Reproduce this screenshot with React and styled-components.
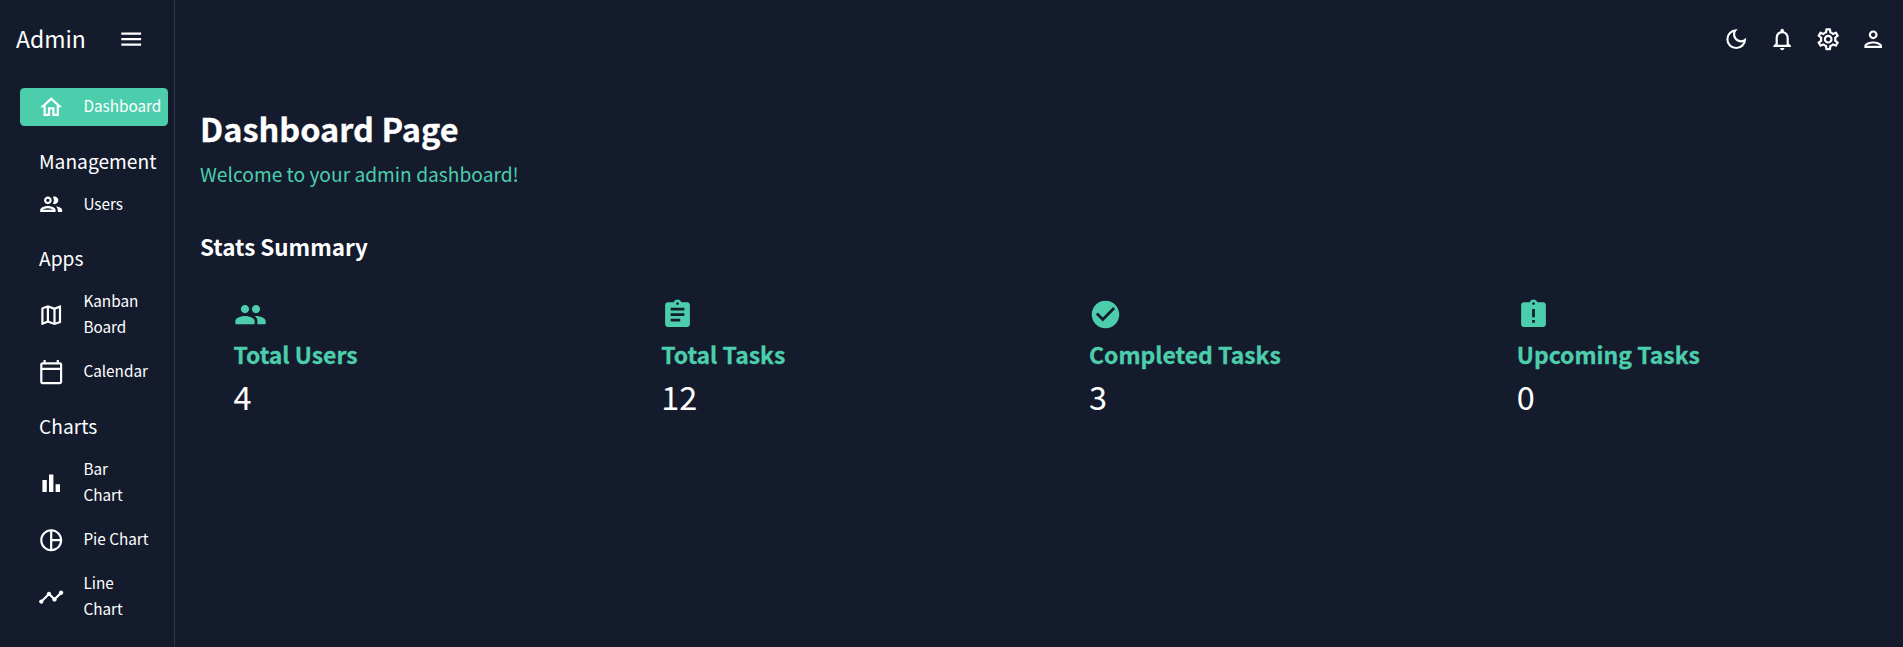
import React from "react";
import styled, { createGlobalStyle } from "styled-components";
import {
  MdMenu,
  MdOutlineHome,
  MdOutlinePeople,
  MdOutlineMap,
  MdOutlineCalendarToday,
  MdOutlineBarChart,
  MdOutlinePieChartOutline,
  MdOutlineTimeline,
  MdOutlineDarkMode,
  MdOutlineNotifications,
  MdOutlineSettings,
  MdOutlinePerson,
  MdPeople,
  MdAssignment,
  MdCheckCircle,
  MdAssignmentLate,
} from "react-icons/md";

const GlobalStyle = createGlobalStyle`
  * { box-sizing: border-box; }
  body {
    margin: 0;
    background: #141b2d;
    color: #fff;
    font-family: "Source Sans Pro", "Noto Sans CJK SC", "Noto Sans", sans-serif;
  }
  svg { display: block; flex: none; }
`;

const Shell = styled.div`
  display: flex;
  height: 100vh;
  overflow: hidden;
`;

const Sidebar = styled.aside`
  flex: none;
  width: 175px;
  border-right: 1px solid #2f3647;
`;

const Brand = styled.div`
  display: flex;
  align-items: center;
  height: 77.6px;
  padding-left: 16px;
`;

const BrandName = styled.span`
  width: 101.6px;
  padding-bottom: 2px;
  font-size: 23px;
  line-height: 36px;
`;

const Nav = styled.nav`
  display: flex;
  flex-direction: column;
  padding: 10.4px 6px 0 20px;
`;

const NavHeading = styled.h2`
  margin: 0;
  height: ${(p) => p.$height}px;
  padding: ${(p) => p.$top}px 0 0 19px;
  font-size: 19.2px;
  font-weight: 400;
  line-height: 32px;
`;

const NavItem = styled.a`
  display: flex;
  align-items: center;
  gap: 18.6px;
  height: ${(p) => (p.$tall ? 62 : 38)}px;
  padding-left: 18.4px;
  border-radius: 4.4px;
  background: ${(p) => (p.$active ? "#4cceac" : "transparent")};
  font-size: 15.3px;
  line-height: 25.7px;
  white-space: pre;

  & + & { margin-top: 7px; }
`;

const NavLabel = styled.span`
  padding-bottom: 2px;
`;

const Main = styled.main`
  flex: 1;
  min-width: 0;
`;

const Topbar = styled.header`
  display: flex;
  justify-content: flex-end;
  align-items: center;
  gap: 19.3px;
  height: 78px;
  padding-right: 16.4px;
`;

const Content = styled.div`
  padding: 26px 25px 0;
`;

const Title = styled.h1`
  margin: 0;
  font-size: 32.5px;
  font-weight: 700;
  line-height: 48px;
  -webkit-text-stroke: 0.3px currentColor;
`;

const Subtitle = styled.p`
  margin: 6px 0 0;
  color: #4cceac;
  font-size: 19.2px;
  line-height: 32px;
`;

const SectionTitle = styled.h2`
  margin: 38px 0 0;
  font-size: 22.4px;
  font-weight: 700;
  line-height: 36px;
`;

const Stats = styled.section`
  display: grid;
  grid-template-columns: repeat(4, 1fr);
  gap: 33px;
  margin-top: 33.5px;
`;

const StatCard = styled.article`
  padding-left: 33.5px;
`;

const StatName = styled.h3`
  margin: 4.5px 0 0;
  color: #4cceac;
  font-size: 22.95px;
  font-weight: 700;
  line-height: 38px;
  white-space: nowrap;
  -webkit-text-stroke: 0.3px currentColor;
`;

const StatValue = styled.p`
  margin: 0;
  font-size: 32.4px;
  line-height: 46px;
`;

const sections = [
  { items: [{ label: "Dashboard", icon: MdOutlineHome, active: true }] },
  { heading: "Management", height: 59.6, top: 19, items: [{ label: "Users", icon: MdOutlinePeople }] },
  {
    heading: "Apps",
    height: 60.4,
    top: 18.3,
    items: [
      { label: "Kanban\nBoard", icon: MdOutlineMap, tall: true },
      { label: "Calendar", icon: MdOutlineCalendarToday },
    ],
  },
  {
    heading: "Charts",
    height: 61,
    top: 19,
    items: [
      { label: "Bar\nChart", icon: MdOutlineBarChart, tall: true },
      { label: "Pie Chart", icon: MdOutlinePieChartOutline },
      { label: "Line\nChart", icon: MdOutlineTimeline, tall: true },
    ],
  },
];

const stats = [
  { name: "Total Users", value: 4, icon: MdPeople },
  { name: "Total Tasks", value: 12, icon: MdAssignment },
  { name: "Completed Tasks", value: 3, icon: MdCheckCircle },
  { name: "Upcoming Tasks", value: 0, icon: MdAssignmentLate },
];

const actions = [MdOutlineDarkMode, MdOutlineNotifications, MdOutlineSettings, MdOutlinePerson];

export default function App() {
  return (
    <Shell>
      <GlobalStyle />
      <Sidebar>
        <Brand>
          <BrandName>Admin</BrandName>
          <MdMenu size={26.4} />
        </Brand>
        <Nav>
          {sections.map((section, i) => (
            <React.Fragment key={i}>
              {section.heading && (
                <NavHeading $height={section.height} $top={section.top}>
                  {section.heading}
                </NavHeading>
              )}
              {section.items.map(({ label, icon: Icon, active, tall }) => (
                <NavItem key={label} $active={active} $tall={tall}>
                  <Icon size={26.4} />
                  <NavLabel>{label}</NavLabel>
                </NavItem>
              ))}
            </React.Fragment>
          ))}
        </Nav>
      </Sidebar>
      <Main>
        <Topbar>
          {actions.map((Icon, i) => (
            <Icon key={i} size={26.4} />
          ))}
        </Topbar>
        <Content>
          <Title>Dashboard Page</Title>
          <Subtitle>Welcome to your admin dashboard!</Subtitle>
          <SectionTitle>Stats Summary</SectionTitle>
          <Stats>
            {stats.map(({ name, value, icon: Icon }) => (
              <StatCard key={name}>
                <Icon size={33} color="#4cceac" />
                <StatName>{name}</StatName>
                <StatValue>{value}</StatValue>
              </StatCard>
            ))}
          </Stats>
        </Content>
      </Main>
    </Shell>
  );
}
